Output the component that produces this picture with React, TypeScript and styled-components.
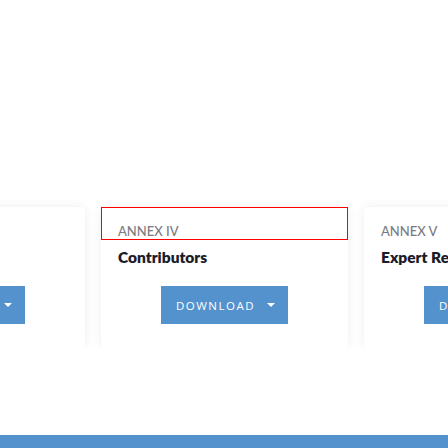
import React from "react";
import styled, { createGlobalStyle } from "styled-components";

const Global = createGlobalStyle`
  html, body { margin: 0; padding: 0; background: #ffffff; }
  body { font-family: "Lato", "Liberation Sans", sans-serif; }
`;

const Page = styled.div`
  width: 448px;
  height: 448px;
  display: flex;
  flex-direction: column;
  overflow: hidden;
  background: #ffffff;
`;

const Section = styled.section`
  padding-top: 207px;
  overflow: hidden;
`;

const Track = styled.div`
  display: flex;
  gap: 16px;
  transform: translateX(-162px);
`;

const Card = styled.article`
  flex: 0 0 247px;
  height: 140px;
  box-sizing: border-box;
  background: #ffffff;
  border-radius: 4px;
  box-shadow: 0 0 12px rgba(0, 0, 0, 0.07);
  display: flex;
  flex-direction: column;
`;

const Header = styled.div<{ $focused?: boolean }>`
  padding: 16px 17px 0;
  height: 33px;
  box-sizing: border-box;
  outline: ${(p) => (p.$focused ? "1px solid #ff0000" : "none")};
  outline-offset: -1px;
`;

const Label = styled.div`
  font-family: "Lato", "Liberation Sans", sans-serif;
  font-size: 13px;
  line-height: 17px;
  color: #7a7a82;
  font-weight: 500;
  white-space: nowrap;
`;

const Title = styled.h3`
  margin: 7px 17px 0;
  font-family: "Lato", "Liberation Sans", sans-serif;
  font-size: 15.5px;
  line-height: 20px;
  font-weight: 800;
  color: #1c1c28;
  white-space: nowrap;
  overflow: hidden;
`;

const Actions = styled.div`
  display: flex;
  justify-content: center;
  margin-top: 19px;
`;

const Button = styled.button`
  width: 127px;
  height: 38px;
  display: flex;
  align-items: center;
  justify-content: center;
  gap: 12px;
  border: none;
  border-radius: 0;
  background: #5492cd;
  color: #ffffff;
  font-family: "Open Sans", "Liberation Sans", sans-serif;
  font-size: 11.5px;
  letter-spacing: 1.5px;
  font-weight: 500;
  padding: 0 0 0 2px;
  cursor: pointer;
`;

const Caret = styled.span`
  width: 0;
  height: 0;
  border-left: 4px solid transparent;
  border-right: 4px solid transparent;
  border-top: 4px solid #ffffff;
`;

const Spacer = styled.div`
  flex: 1;
`;

const Footer = styled.footer`
  height: 13px;
  background: #5492cd;
`;

const cards = [
  { label: "ANNEX III", title: "Methodology" },
  { label: "ANNEX IV", title: "Contributors", focused: true },
  { label: "ANNEX V", title: "Expert Review" },
];

export default function App() {
  return (
    <Page>
      <Global />
      <Section>
        <Track>
          {cards.map((c) => (
            <Card key={c.label}>
              <Header $focused={c.focused}>
                <Label>{c.label}</Label>
              </Header>
              <Title>{c.title}</Title>
              <Actions>
                <Button>
                  DOWNLOAD
                  <Caret />
                </Button>
              </Actions>
            </Card>
          ))}
        </Track>
      </Section>
      <Spacer />
      <Footer />
    </Page>
  );
}
